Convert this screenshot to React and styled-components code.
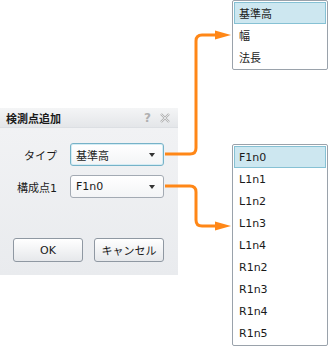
import React from "react";
import styled, { createGlobalStyle } from "styled-components";

const GlobalStyle = createGlobalStyle`
  html, body {
    margin: 0;
    padding: 0;
    background: #ffffff;
  }
  body {
    font-family: "DejaVu Sans", "Noto Sans CJK JP", sans-serif;
    font-size: 11px;
    color: #1a1a1a;
  }
`;

const typeItems = ["基準高", "幅", "法長"];
const pointItems = ["F1n0", "L1n1", "L1n2", "L1n3", "L1n4", "R1n2", "R1n3", "R1n4", "R1n5"];

const App = () => {
  return (
    <StCanvas>
      <GlobalStyle />

      {/* ---------- dialog ---------- */}
      <StDialog>
        <StTitleBar>
          <StTitle>検測点追加</StTitle>
          <StTitleIcons>
            <StHelp>?</StHelp>
            <svg width="10" height="10" viewBox="0 0 10 10">
              <path
                d="M1 1 L9 9 M9 1 L1 9"
                stroke="#b3b3b3"
                strokeWidth="2.4"
                fill="none"
              />
              <path
                d="M1 1 L9 9 M9 1 L1 9"
                stroke="#eef0f2"
                strokeWidth="0.8"
                fill="none"
              />
            </svg>
          </StTitleIcons>
        </StTitleBar>

        <StBody>
          <StRow>
            <StLabel>タイプ</StLabel>
            <StCombo $focused>
              <span>基準高</span>
              <StCaret />
            </StCombo>
          </StRow>
          <StRow>
            <StLabel>構成点1</StLabel>
            <StCombo>
              <span>F1n0</span>
              <StCaret />
            </StCombo>
          </StRow>

          <StButtons>
            <StButton>OK</StButton>
            <StButton>キャンセル</StButton>
          </StButtons>
        </StBody>
      </StDialog>

      {/* ---------- connectors ---------- */}
      <StConnectors width="328" height="346" viewBox="0 0 328 346">
        <path
          d="M165 154 H190 Q196 154 196 148 V41 Q196 35 202 35 H220"
          stroke="#ff8717"
          strokeWidth="3"
          fill="none"
        />
        <polygon points="215,30.5 231,35 215,39.5" fill="#ff8717" />
        <path
          d="M165 186 H190 Q196 186 196 192 V220 Q196 226 202 226 H220"
          stroke="#ff8717"
          strokeWidth="3"
          fill="none"
        />
        <polygon points="215,221.5 231,226 215,230.5" fill="#ff8717" />
      </StConnectors>

      {/* ---------- dropdown lists ---------- */}
      <StList $top={0}>
        {typeItems.map((item, i) => (
          <StListItem key={item} $selected={i === 0}>
            {item}
          </StListItem>
        ))}
      </StList>

      <StList $top={144}>
        {pointItems.map((item, i) => (
          <StListItem key={item} $selected={i === 0}>
            {item}
          </StListItem>
        ))}
      </StList>
    </StCanvas>
  );
};

export default App;

const StCanvas = styled.div`
  position: relative;
  width: 328px;
  height: 346px;
  overflow: hidden;
`;

// ---------- dialog style ----------

const StDialog = styled.div`
  position: absolute;
  left: 0;
  top: 108px;
  width: 178px;
  height: 167px;
  display: flex;
  flex-direction: column;
  background: #eceef0;
`;

const StTitleBar = styled.div`
  height: 19px;
  display: flex;
  align-items: center;
  justify-content: space-between;
  padding: 0 8px 0 6px;
  background: linear-gradient(#f4f5f6, #e4e6e9);
  border-bottom: 1px solid #dcdfe3;
`;

const StTitle = styled.div`
  font-weight: bold;
  font-size: 11px;
  color: #1a1a1a;
`;

const StTitleIcons = styled.div`
  display: flex;
  align-items: center;
  gap: 9px;
`;

const StHelp = styled.span`
  font-family: "DejaVu Sans", sans-serif;
  font-weight: bold;
  font-size: 12px;
  color: #b0b0b0;
  line-height: 1;
`;

const StBody = styled.div`
  flex: 1;
  display: flex;
  flex-direction: column;
  gap: 9px;
  padding: 15px 0 13px 0;
  background: linear-gradient(#f1f2f4, #e9ebee);
`;

const StRow = styled.div`
  display: flex;
  align-items: center;
  gap: 13px;
`;

const StLabel = styled.div`
  width: 57px;
  text-align: right;
`;

const StCombo = styled.div`
  box-sizing: border-box;
  width: 94px;
  height: 23px;
  display: flex;
  align-items: center;
  justify-content: space-between;
  padding: 0 8px 0 5px;
  border-radius: 3px;
  border: 1px solid ${(p) => (p.$focused ? "#76b2c8" : "#a3aab3")};
  background: linear-gradient(#ffffff, #f3f4f6);
  box-shadow: ${(p) => (p.$focused ? "inset 0 0 0 1px #d4ecf4" : "none")};
`;

const StCaret = styled.span`
  width: 0;
  height: 0;
  border-left: 3.5px solid transparent;
  border-right: 3.5px solid transparent;
  border-top: 4px solid #333;
`;

const StButtons = styled.div`
  margin-top: auto;
  display: flex;
  gap: 11px;
  padding-left: 13px;
`;

const StButton = styled.div`
  box-sizing: border-box;
  width: 70px;
  height: 24px;
  display: flex;
  align-items: center;
  justify-content: center;
  border-radius: 3px;
  border: 1px solid #8f98a2;
  background: linear-gradient(#ffffff, #e6e8eb);
`;

const StConnectors = styled.svg`
  position: absolute;
  left: 0;
  top: 0;
`;

// ---------- list style ----------

const StList = styled.div`
  position: absolute;
  left: 232px;
  top: ${(p) => p.$top}px;
  width: 96px;
  box-sizing: border-box;
  padding: 1px;
  border: 1px solid #9aa2ab;
  border-radius: 2px;
  background: #ffffff;
`;

const StListItem = styled.div`
  box-sizing: border-box;
  height: 22px;
  display: flex;
  align-items: center;
  padding-left: 4px;
  border: 1px solid ${(p) => (p.$selected ? "#86c1d4" : "transparent")};
  background: ${(p) => (p.$selected ? "#cde7f0" : "transparent")};
`;
